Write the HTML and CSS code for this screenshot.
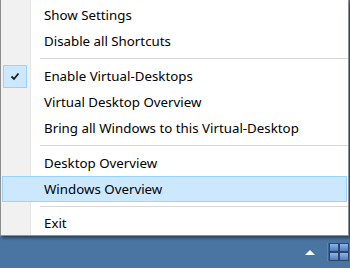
FILE: index.html
```html
<!DOCTYPE html>
<html lang="en">
<head>
  <meta charset="UTF-8" />
  <title>Tray Menu</title>
  <link rel="stylesheet" href="styles.css">
</head>
<body>
  <div class="menu">
    <div class="item"><span class="mark"></span>Show Settings</div>
    <div class="item"><span class="mark"></span>Disable all Shortcuts</div>
    <div class="sep"></div>
    <div class="item">
      <span class="mark checked">
        <svg width="24" height="23" viewBox="0 0 24 23"><path d="M8.5 11.5 L11 14 L15.5 8.5" fill="none" stroke="#1b1b1b" stroke-width="1.8"/></svg>
      </span>Enable Virtual-Desktops
    </div>
    <div class="item"><span class="mark"></span>Virtual Desktop Overview</div>
    <div class="item"><span class="mark"></span>Bring all Windows to this Virtual-Desktop</div>
    <div class="sep"></div>
    <div class="item"><span class="mark"></span>Desktop Overview</div>
    <div class="item hover"><span class="mark"></span>Windows Overview</div>
    <div class="sep"></div>
    <div class="item last"><span class="mark"></span>Exit</div>
  </div>
  <div class="taskbar">
    <span class="tray-arrow"></span>
    <div class="desk-icon">
      <span></span><span></span><span></span><span></span>
    </div>
  </div>
</body>
</html>
```

FILE: styles.css
```css
body {
  margin: 0;
  width: 350px;
  height: 268px;
  overflow: hidden;
  display: flex;
  flex-direction: column;
  background: #4a74a1;
  font-family: "Noto Sans", sans-serif;
  font-size: 13.3px;
  color: #000;
}

.menu {
  width: 347px;
  padding-top: 2px;
  border: 1px solid #8e8e8e;
  border-top: none;
  background: linear-gradient(to right, #f1f1f1 29px, #e6e6e6 29px, #e6e6e6 30px, #fff 30px);
  box-shadow: 2px 2px 3px rgba(0, 0, 0, 0.45);
  position: relative;
  z-index: 1;
}

.item {
  height: 26px;
  margin: 0 1px;
  display: flex;
  align-items: center;
  white-space: nowrap;
}

.item.last {
  height: 24px;
  padding-bottom: 1px;
  box-sizing: border-box;
}

.mark {
  width: 24px;
  height: 23px;
  margin: 0 17px 0 1px;
  box-sizing: border-box;
}

.mark.checked {
  background: #cce8ff;
  border: 1px solid #99d1ff;
}

.mark svg {
  display: block;
  margin: -1px;
}

.hover {
  background: #cce8ff;
  box-shadow: inset 0 0 0 1px #99d1ff;
}

.sep {
  height: 1px;
  margin: 4px 0 3px 39px;
  background: #d7d7d7;
  border-bottom: 1px solid #fff;
}

.taskbar {
  flex: 1;
  display: flex;
  align-items: center;
  justify-content: flex-end;
  gap: 11px;
  padding-right: 1px;
}

.tray-arrow {
  width: 0;
  height: 0;
  border-left: 5px solid transparent;
  border-right: 5px solid transparent;
  border-bottom: 5px solid #fff;
  margin-top: 1px;
}

.desk-icon {
  display: grid;
  grid-template-columns: 8px 8px;
  grid-template-rows: 7px 7px;
  gap: 2px;
  padding: 1px;
  background: #2c4566;
  border-left: 1px solid #3d628c;
  margin-left: 2px;
  box-shadow: -1px 0 0 #5a84b2;
}

.desk-icon span {
  background: linear-gradient(#8fb4e6, #4c7dc0);
}
```
